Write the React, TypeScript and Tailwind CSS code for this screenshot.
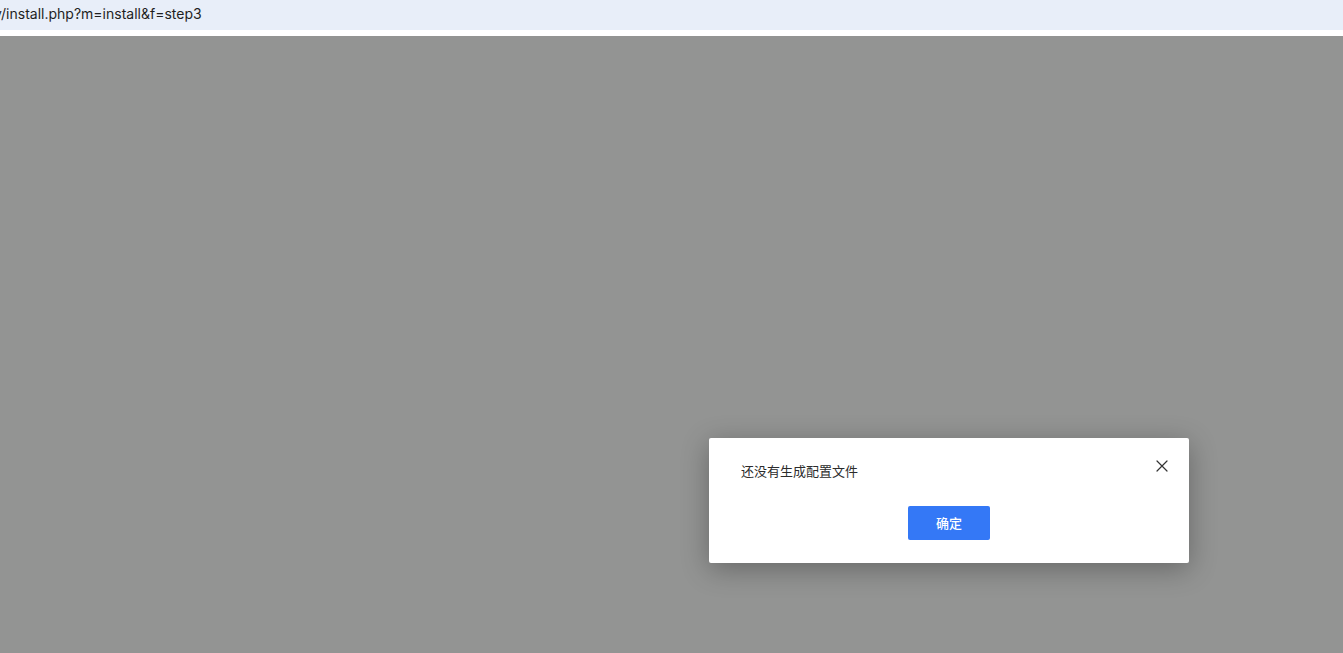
import React from "react";

export default function App() {
  return (
    <div className="w-[1343px] h-[653px] flex flex-col overflow-hidden" style={{ fontFamily: '"Inter", "Noto Sans CJK SC", sans-serif' }}>
      <div className="h-[30px] bg-[#e8eef9] flex items-center shrink-0 overflow-hidden">
        <span className="text-[14px] text-[#1f1f1f] ml-[-6px] leading-none pb-[2px] whitespace-nowrap">y/install.php?m=install&amp;f=step3</span>
      </div>
      <div className="h-[6px] bg-white shrink-0" />
      <div className="flex-1 bg-[#939493] pt-[402px] pl-[709px]">
        <div className="w-[480px] h-[125px] bg-white rounded-[2px] shadow-[0_6px_28px_rgba(0,0,0,0.3)] flex flex-col">
          <div className="flex items-start pl-[32px] pr-[21px] pt-[20px]">
            <span className="flex-1 text-[13px] text-[#2b2b2b] leading-[20px] pt-[3px]" style={{ fontFamily: '"Noto Sans CJK SC", sans-serif' }}>还没有生成配置文件</span>
            <svg width="12" height="12" viewBox="0 0 12 12" className="mt-[2px]">
              <path d="M1 1 L11 11 M11 1 L1 11" stroke="#333" strokeWidth="1.2" strokeLinecap="round" />
            </svg>
          </div>
          <div className="flex justify-center mt-[25px]">
            <button className="w-[82px] h-[34px] bg-[#3478f6] text-white text-[13px] font-medium rounded-[2px]" style={{ fontFamily: '"Noto Sans CJK SC", sans-serif' }}>确定</button>
          </div>
        </div>
      </div>
    </div>
  );
}
